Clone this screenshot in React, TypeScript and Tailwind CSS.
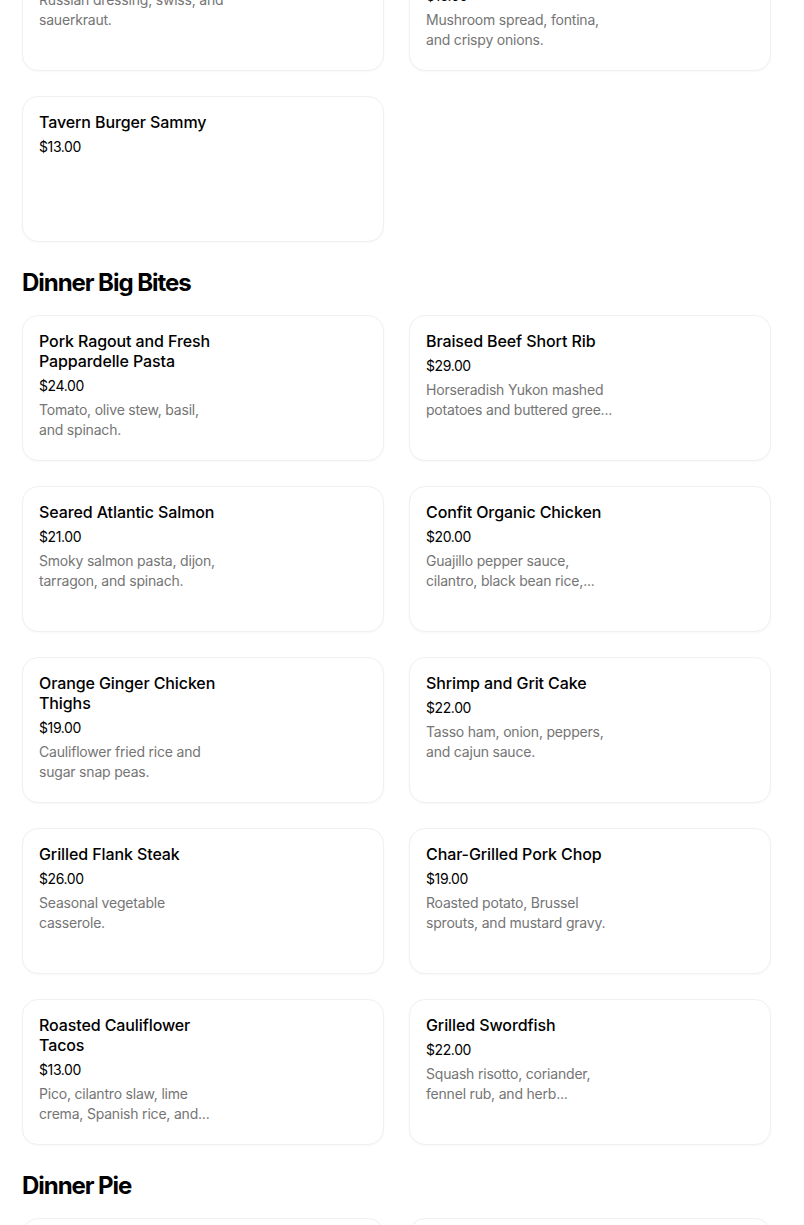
type Item = {
  name: string;
  price: string;
  desc?: string;
};

const sandwiches: Item[] = [
  {
    name: "Reuben Sammy",
    price: "$14.00",
    desc: "Russian dressing, swiss, and sauerkraut.",
  },
  {
    name: "Mushroom and Fontina Burger Sammy",
    price: "$15.00",
    desc: "Mushroom spread, fontina, and crispy onions.",
  },
  { name: "Tavern Burger Sammy", price: "$13.00" },
];

// descriptions are shown as the menu trims them (two lines max)
const bigBites: Item[] = [
  {
    name: "Pork Ragout and Fresh Pappardelle Pasta",
    price: "$24.00",
    desc: "Tomato, olive stew, basil, and spinach.",
  },
  {
    name: "Braised Beef Short Rib",
    price: "$29.00",
    desc: "Horseradish Yukon mashed potatoes and buttered gree...",
  },
  {
    name: "Seared Atlantic Salmon",
    price: "$21.00",
    desc: "Smoky salmon pasta, dijon, tarragon, and spinach.",
  },
  {
    name: "Confit Organic Chicken",
    price: "$20.00",
    desc: "Guajillo pepper sauce, cilantro, black bean rice,...",
  },
  {
    name: "Orange Ginger Chicken Thighs",
    price: "$19.00",
    desc: "Cauliflower fried rice and sugar snap peas.",
  },
  {
    name: "Shrimp and Grit Cake",
    price: "$22.00",
    desc: "Tasso ham, onion, peppers, and cajun sauce.",
  },
  {
    name: "Grilled Flank Steak",
    price: "$26.00",
    desc: "Seasonal vegetable casserole.",
  },
  {
    name: "Char-Grilled Pork Chop",
    price: "$19.00",
    desc: "Roasted potato, Brussel sprouts, and mustard gravy.",
  },
  {
    name: "Roasted Cauliflower Tacos",
    price: "$13.00",
    desc: "Pico, cilantro slaw, lime crema, Spanish rice, and...",
  },
  {
    name: "Grilled Swordfish",
    price: "$22.00",
    desc: "Squash risotto, coriander, fennel rub, and herb...",
  },
];

const pies: Item[] = [
  { name: "Margherita Pie", price: "$16.00", desc: "Tomato, mozzarella, and basil." },
  { name: "Pepperoni Pie", price: "$18.00", desc: "Tomato, mozzarella, and pepperoni." },
];

function MenuCard({ item }: { item: Item }) {
  return (
    <div className="h-[146px] rounded-2xl border border-[#f0f0f0] bg-white px-4 pt-[15px] shadow-[0_1px_2px_rgba(0,0,0,0.03)]">
      <div className="w-[187px]">
        <h3 className="text-[16px] leading-5 font-medium text-[#000] tracking-[-0.1px]">{item.name}</h3>
        <p className="mt-[5px] text-[14px] leading-5 text-[#000] tracking-[-0.4px]">{item.price}</p>
        {item.desc && (
          <p className="mt-1 text-[14px] leading-5 text-[#757575] tracking-[-0.2px] line-clamp-2">
            {item.desc}
          </p>
        )}
      </div>
    </div>
  );
}

function Grid({ items, className = "" }: { items: Item[]; className?: string }) {
  return (
    <div className={`grid grid-cols-[362px_362px] gap-x-[25px] gap-y-[25px] ${className}`}>
      {items.map((item) => (
        <MenuCard key={item.name} item={item} />
      ))}
    </div>
  );
}

function SectionTitle({ children }: { children: string }) {
  return (
    <h2 className="mt-[25px] mb-4 text-[24px] leading-8 font-bold tracking-[-1.05px] text-black">
      {children}
    </h2>
  );
}

export default function App() {
  return (
    <div
      className="h-[1225px] overflow-hidden bg-white"
      style={{ fontFamily: "Inter, 'Noto Sans', sans-serif" }}
    >
      <div className="w-[749px] ml-[22px]">
        <Grid items={sandwiches} className="-mt-[75px]" />
        <SectionTitle>Dinner Big Bites</SectionTitle>
        <Grid items={bigBites} />
        <SectionTitle>Dinner Pie</SectionTitle>
        <Grid items={pies} />
      </div>
    </div>
  );
}
